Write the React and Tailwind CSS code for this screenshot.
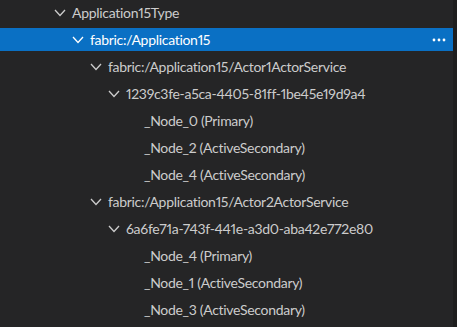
const rows = [
  { level: 0, label: 'Application15Type', open: true },
  { level: 1, label: 'fabric:/Application15', open: true, selected: true },
  { level: 2, label: 'fabric:/Application15/Actor1ActorService', open: true },
  { level: 3, label: '1239c3fe-a5ca-4405-81ff-1be45e19d9a4', open: true },
  { level: 4, label: '_Node_0 (Primary)' },
  { level: 4, label: '_Node_2 (ActiveSecondary)' },
  { level: 4, label: '_Node_4 (ActiveSecondary)' },
  { level: 2, label: 'fabric:/Application15/Actor2ActorService', open: true },
  { level: 3, label: '6a6fe71a-743f-441e-a3d0-aba42e772e80', open: true },
  { level: 4, label: '_Node_4 (Primary)' },
  { level: 4, label: '_Node_1 (ActiveSecondary)' },
  { level: 4, label: '_Node_3 (ActiveSecondary)' },
]

function Chevron() {
  return (
    <svg width="18" height="12" viewBox="0 0 18 12" className="shrink-0">
      <polyline points="1,3 6,8.5 11,3" fill="none" stroke="currentColor" strokeWidth="1.3" />
    </svg>
  )
}

function Ellipsis() {
  return (
    <svg width="14" height="4" viewBox="0 0 14 4">
      <circle cx="2" cy="2" r="1.4" fill="#fff" />
      <circle cx="7" cy="2" r="1.4" fill="#fff" />
      <circle cx="12" cy="2" r="1.4" fill="#fff" />
    </svg>
  )
}

export default function App() {
  return (
    <div
      className="w-[457px] h-[327px] overflow-hidden bg-[#252526] flex"
      style={{ fontFamily: 'Lato, "Noto Sans", sans-serif' }}
    >
      <div className="flex-1 flex flex-col -mt-px">
        {rows.map((row, i) => (
          <div key={i} className="h-[27px] shrink-0 py-[2px]">
            <div
              className={
                'h-[23px] flex items-center pr-[7px] text-[14px] tracking-[-0.3px] proportional-nums ' +
                (row.selected ? 'bg-[#0a70c4] text-white' : 'text-[#cccccc]')
              }
              style={{ paddingLeft: 54 + row.level * 18 }}
            >
              {row.open ? <Chevron /> : <span className="w-[18px] shrink-0" />}
              <span className="whitespace-nowrap leading-none">{row.label}</span>
              {row.selected && (
                <span className="ml-auto flex items-center">
                  <Ellipsis />
                </span>
              )}
            </div>
          </div>
        ))}
      </div>
      <div className="w-[4px] bg-[#1e1e1e]" />
    </div>
  )
}
